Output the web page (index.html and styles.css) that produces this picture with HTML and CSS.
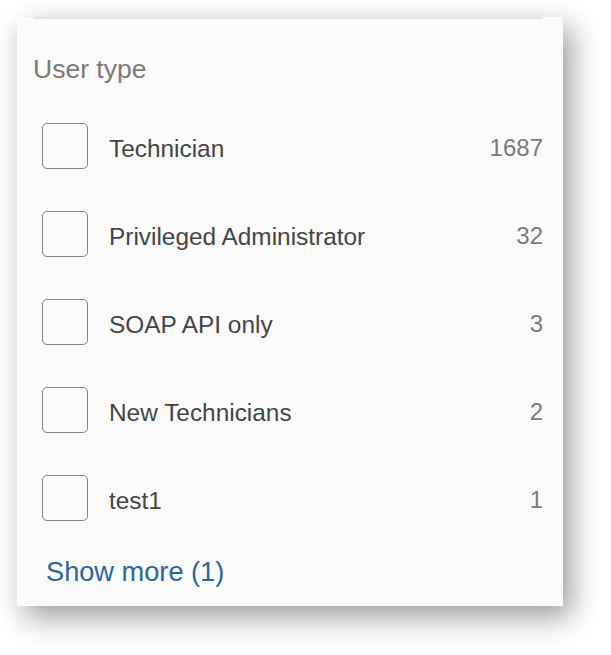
FILE: index.html
```html
<!DOCTYPE html>
<html lang="en">
<head>
    <meta charset="UTF-8">
    <meta name="viewport" content="width=device-width, initial-scale=1.0">
    <title>User type filter</title>
    <link rel="stylesheet" href="styles.css">
</head>
<body>
    <div class="facet">
        <div class="facet-rule"></div>
        <h3 class="facet-title">User type</h3>
        <ul class="facet-list">
            <li class="facet-row">
                <span class="check"></span>
                <span class="facet-name">Technician</span>
                <span class="facet-count">1687</span>
            </li>
            <li class="facet-row">
                <span class="check"></span>
                <span class="facet-name">Privileged Administrator</span>
                <span class="facet-count">32</span>
            </li>
            <li class="facet-row">
                <span class="check"></span>
                <span class="facet-name">SOAP API only</span>
                <span class="facet-count">3</span>
            </li>
            <li class="facet-row">
                <span class="check"></span>
                <span class="facet-name">New Technicians</span>
                <span class="facet-count">2</span>
            </li>
            <li class="facet-row">
                <span class="check"></span>
                <span class="facet-name">test1</span>
                <span class="facet-count">1</span>
            </li>
        </ul>
        <a href="#" class="show-more">Show more (1)</a>
    </div>
</body>
</html>
```

FILE: styles.css
```css
html { background: #fff; }
body { font-family: "Liberation Sans", Arial, sans-serif; margin: 0; padding: 17px; min-height: 100vh; box-sizing: border-box; background: #fff; }
.facet { width: 546px; box-sizing: border-box; background: #fafafa; padding: 0 20px 18px 16px; box-shadow: 8px 11px 28px rgba(0,0,0,0.4); }
.facet-rule { height: 2px; background: #dde3ea; }
.facet-title { margin: 35px 0 18px; font-size: 26.5px; line-height: 30px; font-weight: normal; color: #7a7a7a; }
.facet-list { list-style: none; margin: 0; padding: 0; }
.facet-row { display: flex; align-items: center; height: 88px; padding-left: 9px; }
.check { width: 44px; height: 44px; border: 1.5px solid #858585; border-radius: 5px; background: #fbfbfb; flex-shrink: 0; }
.facet-name { flex-grow: 1; margin-left: 21px; padding-top: 5px; font-size: 24.4px; line-height: 28px; color: #454545; }
.facet-count { padding-top: 4px; font-size: 24px; line-height: 28px; color: #7a7a7a; }
.show-more { display: block; margin: 14px 0 0 13px; font-size: 27.2px; line-height: 32px; color: #2b66a0; text-decoration: none; }
```
